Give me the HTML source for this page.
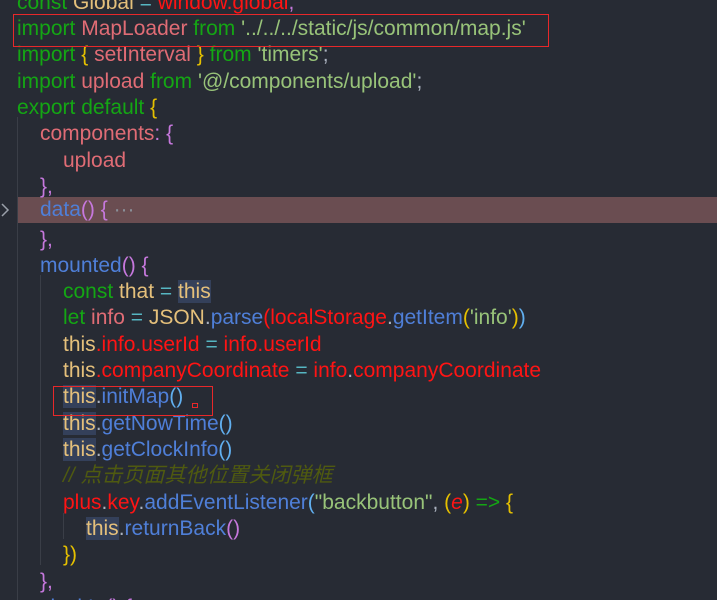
<!DOCTYPE html>
<html style="overflow:hidden"><head><meta charset="utf-8"><style>
html,body{margin:0;height:600px;overflow:hidden}
body{width:717px;background:#272b34;font-family:"Liberation Sans","Noto Sans CJK SC",sans-serif;font-size:21px;position:relative}
.l{position:absolute;left:17px;height:26px;line-height:26px;white-space:pre;color:#abb2bf;margin-top:3px}
.k{color:#14a614}.v{color:#e06c75}.s{color:#98c379}.r{color:#ff1414}.f{color:#4f7fd8}.t{color:#e5c07b}.p{color:#c678dd}.y{color:#e5c000}.c{color:#4f5a10;font-style:italic}.o{color:#56b6c2}.cy{color:#61afef}
.th{background:#34405a}
.g{position:absolute;width:1px;background:#3a3e47}
.box{position:absolute;border:1px solid #e8282a}
</style></head><body>
<div style="position:absolute;left:17px;top:197px;width:700px;height:26px;background:#6a4d51"></div>
<div class="g" style="left:17px;top:117px;height:483px"></div>
<div class="g" style="left:40px;top:275px;height:290px"></div>
<div class="g" style="left:63px;top:513px;height:26px"></div>
<svg style="position:absolute;left:0;top:202px" width="10" height="16"><path d="M2 2 L8 8 L2 14" fill="none" stroke="#9aa0aa" stroke-width="1.5"/></svg>
<div class="l" style="top:-13px"><span class="k">const</span> <span class="t">Global</span> <span class="o">=</span> <span class="r">window.global</span><span class="p">,</span></div>
<div class="l" style="top:13px"><span class="k">import</span> <span class="v">MapLoader</span> <span class="k">from</span> <span class="s">'../../../static/js/common/map.js'</span></div>
<div class="l" style="top:39px"><span class="k">import</span> <span class="y">{</span> <span class="v">setInterval</span> <span class="y">}</span> <span class="k">from</span> <span class="s">'timers'</span>;</div>
<div class="l" style="top:66px"><span class="k">import</span> <span class="v">upload</span> <span class="k">from</span> <span class="s">'@/components/upload'</span>;</div>
<div class="l" style="top:92px"><span class="k">export default</span> <span class="y">{</span></div>
<div class="l" style="top:118px;left:40px"><span class="v">components</span><span class="p">: {</span></div>
<div class="l" style="top:145px;left:63px"><span class="v">upload</span></div>
<div class="l" style="top:171px;left:40px"><span class="p">},</span></div>
<div class="l" style="top:197px;left:40px;margin-top:0"><span class="f">data</span><span class="p">() {</span> <span style="color:#8a8f98">···</span></div>
<div class="l" style="top:224px;left:40px"><span class="p">},</span></div>
<div class="l" style="top:250px;left:40px"><span class="f">mounted</span><span class="p">() {</span></div>
<div class="l" style="top:276px;left:63px"><span class="k">const</span> <span class="t">that</span> <span class="o">=</span> <span class="t th">this</span></div>
<div class="l" style="top:302px;left:63px"><span class="k">let</span> <span class="v">info</span> <span class="o">=</span> <span class="t">JSON</span>.<span class="f">parse</span><span class="r">(localStorage</span>.<span class="f">getItem</span><span class="y">(</span><span class="s">'info'</span><span class="y">)</span><span class="cy">)</span></div>
<div class="l" style="top:329px;left:63px"><span class="t">this</span><span class="r">.info.userId</span> <span class="o">=</span> <span class="r">info.userId</span></div>
<div class="l" style="top:355px;left:63px"><span class="t">this</span><span class="r">.companyCoordinate</span> <span class="o">=</span> <span class="r">info</span>.<span class="r">companyCoordinate</span></div>
<div class="l" style="top:381px;left:63px"><span class="t th">this</span>.<span class="f">initMap</span><span class="cy">()</span></div>
<div class="l" style="top:408px;left:63px"><span class="t th">this</span>.<span class="f">getNowTime</span><span class="cy">()</span></div>
<div class="l" style="top:434px;left:63px"><span class="t th">this</span>.<span class="f">getClockInfo</span><span class="cy">()</span></div>
<div class="l" style="top:460px;left:63px"><span class="c">// 点击页面其他位置关闭弹框</span></div>
<div class="l" style="top:487px;left:63px"><span class="r">plus</span>.<span class="r">key</span>.<span class="f">addEventListener</span><span class="cy">(</span><span class="s">"backbutton"</span>, <span class="y">(</span><span class="r" style="font-style:italic">e</span><span class="y">)</span> <span class="k">=&gt;</span> <span class="y">{</span></div>
<div class="l" style="top:513px;left:86px"><span class="t th">this</span>.<span class="f">returnBack</span><span class="p">()</span></div>
<div class="l" style="top:539px;left:63px"><span class="y">})</span></div>
<div class="l" style="top:566px;left:40px"><span class="p">},</span></div>
<div class="l" style="top:592px;left:40px"><span class="f">clockIn</span><span class="p">() {</span></div>
<div class="box" style="left:13px;top:14px;width:534px;height:31px"></div>
<div class="box" style="left:53px;top:386px;width:158px;height:28px"></div>
<div style="position:absolute;left:192px;top:403px;width:4px;height:3px;border:1px solid #e8282a"></div>
</body></html>
